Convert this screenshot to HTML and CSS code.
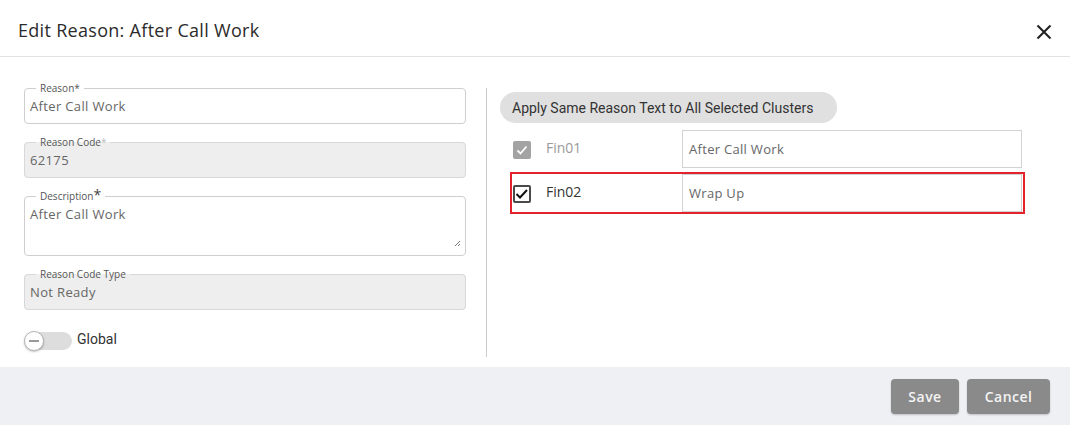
FILE: index.html
```html
<!DOCTYPE html>
<html lang="en">
<head>
<meta charset="utf-8">
<title>Edit Reason</title>
<link rel="stylesheet" href="styles.css">
</head>
<body>
<div class="modal">
  <div class="header">
    <h1 class="title">Edit Reason: After Call Work</h1>
    <button class="close" aria-label="Close">
      <svg width="18" height="18" viewBox="0 0 18 18"><path d="M2.5 2.5 L15.5 15.5 M15.5 2.5 L2.5 15.5" stroke="#222" stroke-width="2.1" fill="none"/></svg>
    </button>
  </div>
  <div class="content">
    <div class="left">
      <fieldset class="field">
        <legend>Reason*</legend>
        <div class="val">After Call Work</div>
      </fieldset>
      <fieldset class="field disabled">
        <legend>Reason Code<span class="ast-light">*</span></legend>
        <div class="val">62175</div>
      </fieldset>
      <fieldset class="field">
        <legend>Description<span class="ast-big">*</span></legend>
        <div class="val area">
          <span>After Call Work</span>
          <svg class="grip" width="7" height="7" viewBox="0 0 7 7"><path d="M1 6 L6 1 M4 6 L6 4" stroke="#777" stroke-width="1" fill="none"/></svg>
        </div>
      </fieldset>
      <fieldset class="field disabled">
        <legend>Reason Code Type</legend>
        <div class="val">Not Ready</div>
      </fieldset>
      <div class="toggle-row">
        <span class="toggle"><span class="knob"></span></span>
        <span class="toggle-label">Global</span>
      </div>
    </div>
    <div class="divider"></div>
    <div class="right">
      <button class="pill">Apply Same Reason Text to All Selected Clusters</button>
      <div class="row">
        <span class="cb cb-disabled">
          <svg width="18" height="18" viewBox="0 0 18 18"><path d="M4.5 9.5 L7.5 12.5 L13.5 5.5" stroke="#fff" stroke-width="1.8" fill="none"/></svg>
        </span>
        <span class="cname muted">Fin01</span>
        <div class="tinput">After Call Work</div>
      </div>
      <div class="row selected">
        <span class="cb cb-on">
          <svg width="18" height="18" viewBox="0 0 18 18"><path d="M3.5 9 L7 12.5 L14 5" stroke="#111" stroke-width="2" fill="none"/></svg>
        </span>
        <span class="cname">Fin02</span>
        <div class="tinput">Wrap Up</div>
      </div>
    </div>
  </div>
  <div class="footer">
    <button class="btn">Save</button>
    <button class="btn">Cancel</button>
  </div>
</div>
</body>
</html>
```
FILE: styles.css
```css
* { box-sizing: border-box; }
html, body { margin: 0; padding: 0; background: #fff; }
body {
  width: 1070px;
  height: 425px;
  overflow: hidden;
  font-family: "Open Sans", "Liberation Sans", sans-serif;
  color: #333;
}
.modal { width: 1070px; height: 425px; display: flex; flex-direction: column; }

.header {
  height: 57px;
  border-bottom: 1px solid #e2e2e2;
  display: flex;
  align-items: flex-start;
  justify-content: space-between;
  padding: 18px 17px 0 18px;
}
.title {
  margin: 0;
  font-size: 18px;
  font-weight: 400;
  line-height: 24px;
  letter-spacing: 0.3px;
  color: #2b2b2b;
}
.close {
  border: 0;
  background: none;
  padding: 0;
  margin-top: 5px;
  width: 18px;
  height: 18px;
  display: block;
}
.close svg { display: block; }

.content {
  height: 310px;
  display: flex;
  padding: 25px 0 0 24px;
}
.left { width: 442px; flex: none; }

.field {
  margin: 0 0 12px 0;
  padding: 0 5px 8px 5px;
  border: 1px solid #cfcfcf;
  border-radius: 4px;
  min-width: 0;
}
.field.disabled { background: #eeeeee; border-color: #d8d8d8; }
.field legend {
  margin-left: 6px;
  padding: 0 4px;
  font-size: 10px;
  line-height: 12px;
  color: #555;
}
.ast-light { color: #bbb; }
.ast-big { font-size: 14px; line-height: 10px; color: #444; vertical-align: top; }
.val {
  padding-top: 3px;
  font-size: 13px;
  line-height: 18px;
  color: #666;
  letter-spacing: 0.35px;
}
.val.area {
  height: 45px;
  display: flex;
  flex-direction: column;
  justify-content: space-between;
}
.grip { align-self: flex-end; margin-right: -1px; display: block; }

.toggle-row {
  margin-top: 21px;
  display: flex;
  align-items: center;
  height: 20px;
}
.toggle {
  width: 45px;
  height: 18px;
  border-radius: 9px;
  background: #dddddd;
  margin-left: 3px;
  display: flex;
  align-items: center;
}
.knob {
  width: 20px;
  height: 20px;
  margin-left: -3px;
  border-radius: 50%;
  background: #fff;
  border: 1px solid #b5b5b5;
  box-shadow: 0 1px 2px rgba(0,0,0,0.25);
  display: flex;
  align-items: center;
  justify-content: center;
}
.knob::after {
  content: "";
  width: 10px;
  height: 2px;
  background: #999;
}
.toggle-label {
  margin-left: 5px;
  margin-top: -4px;
  font-family: Roboto, "Liberation Sans", sans-serif;
  font-size: 14px;
  color: #333;
}

.divider {
  width: 1px;
  background: #cccccc;
  margin: 6px 13px 10px 20px;
  flex: none;
}

.right { flex: 1; padding-top: 10px; }
.pill {
  display: block;
  width: 337px;
  height: 31px;
  border: 0;
  border-radius: 16px;
  background: #e0e0e0;
  padding: 0 0 0 12px;
  text-align: left;
  font-family: Roboto, "Liberation Sans", sans-serif;
  font-size: 14px;
  color: #333;
}
.row {
  margin: 5px 0 0 10px;
  width: 515px;
  height: 42px;
  border: 2px solid transparent;
  display: flex;
  align-items: center;
  padding-left: 1px;
}
.row + .row { margin-top: 2px; }
.row.selected { border-color: #e3232b; }
.cb {
  width: 18px;
  height: 18px;
  flex: none;
  border-radius: 2px;
  margin-top: 2px;
  display: flex;
}
.cb svg { display: block; }
.cb-disabled { background: #a3a3a3; }
.cb-on { border: 2px solid #4a4a4a; background: #fff; }
.cb-on svg { margin: -2px; }
.cname {
  width: 136px;
  margin-left: 15px;
  margin-top: -3px;
  flex: none;
  font-size: 14px;
  color: #333;
}
.cname.muted { color: #9a9a9a; }
.tinput {
  width: 340px;
  height: 38px;
  border: 1px solid #d2d2d2;
  padding: 0 6px;
  display: flex;
  align-items: center;
  font-size: 13px;
  color: #666;
  letter-spacing: 0.3px;
  flex: none;
}

.footer {
  height: 58px;
  background: #eef0f4;
  display: flex;
  justify-content: flex-end;
  align-items: flex-start;
  gap: 8px;
  padding: 12px 20px 0 0;
}
.btn {
  height: 35px;
  border: 0;
  border-radius: 4px;
  background: #8a8a8a;
  color: #f4f4f4;
  font-family: "Open Sans", "Liberation Sans", sans-serif;
  font-weight: 600;
  font-size: 14px;
  letter-spacing: 0.5px;
  padding: 0 17.5px;
  box-shadow: 0 1px 2px rgba(0,0,0,0.2);
}
```
